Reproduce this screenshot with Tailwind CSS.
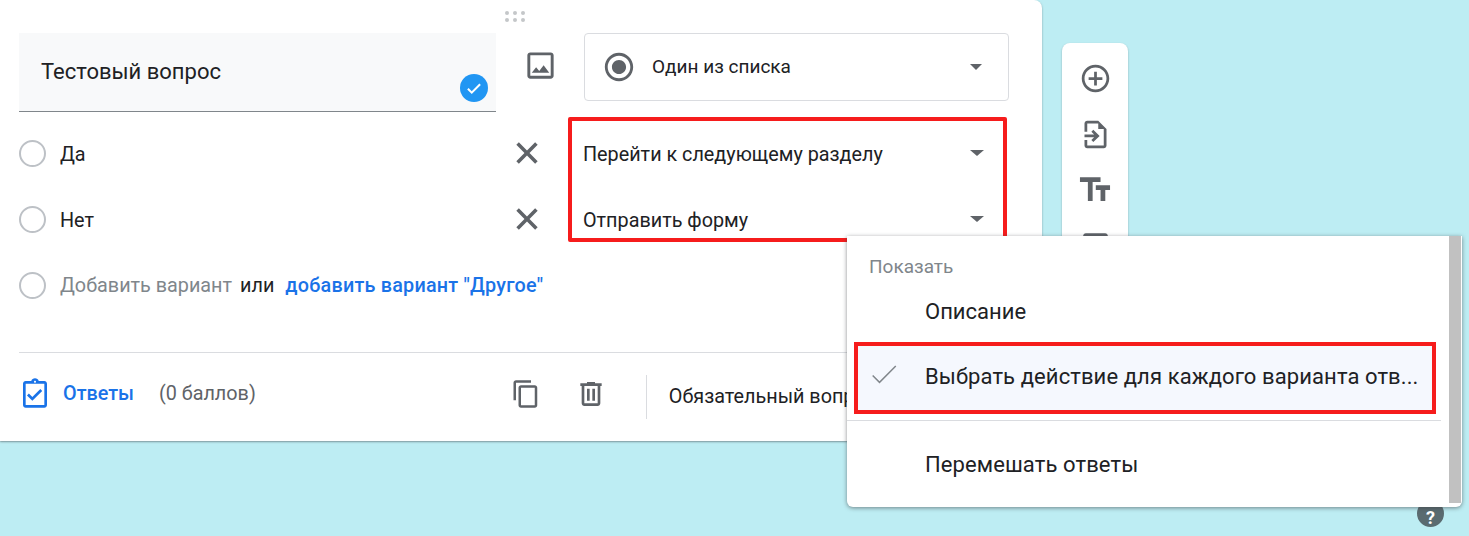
<!DOCTYPE html>
<html lang="ru">
<head>
    <meta charset="UTF-8">
    <title>Тестовый вопрос</title>
    <script src="https://cdn.jsdelivr.net/npm/@tailwindcss/browser@4"></script>
</head>
<body class="relative h-[536px] w-[1469px] overflow-hidden bg-[#bdedf3] font-['Roboto',sans-serif] text-[#202124]">
    <div class="flex items-start">
        <!-- question card -->
        <div class="relative h-[441px] w-[1042px] rounded-br-lg rounded-tr-lg bg-white pt-[33px] shadow-[0_1px_2px_rgba(60,64,67,0.5)]">
            <div class="absolute left-[505px] top-[11px] grid grid-cols-3 gap-x-[4px] gap-y-[3px]">
                <span class="size-[4px] rounded-full bg-[#c4c7c9]"></span><span class="size-[4px] rounded-full bg-[#c4c7c9]"></span><span class="size-[4px] rounded-full bg-[#c4c7c9]"></span>
                <span class="size-[4px] rounded-full bg-[#c4c7c9]"></span><span class="size-[4px] rounded-full bg-[#c4c7c9]"></span><span class="size-[4px] rounded-full bg-[#c4c7c9]"></span>
            </div>

            <div class="flex h-[87px] items-start pl-[19px]">
                <div class="relative flex h-[79px] w-[477px] items-center border-b border-[#80868b] bg-[#f8f9fa] pl-[22px] pb-[2px] text-[22px]">
                    Тестовый вопрос
                    <span class="absolute left-[441px] top-[41px] flex size-[28px] items-center justify-center rounded-full bg-[#2196f3]">
                        <svg viewBox="0 0 24 24" class="size-[18px] fill-white"><path d="M9 16.200 4.800 12l-1.900 1.900L9 20 21.100 7.900 19.200 6z"/></svg>
                    </span>
                </div>
                <svg viewBox="0 0 24 24" class="ml-[27px] mt-[15px] size-[35px] fill-[#5f6368]"><path d="M19 5v14H5V5h14m0-2H5c-1.100 0-2 .900-2 2v14c0 1.100.900 2 2 2h14c1.100 0 2-.900 2-2V5c0-1.100-.900-2-2-2zm-4.860 8.860l-3 3.870L9 13.140 6 17h12l-3.860-5.140z"/></svg>
                <div class="ml-[26px] flex h-[68px] w-[425px] items-center rounded border border-[#dadce0] pl-[17px] pr-[26px]">
                    <svg viewBox="0 0 24 24" class="size-[34px] fill-[#5f6368]"><path d="M12 7c-2.760 0-5 2.240-5 5s2.240 5 5 5 5-2.240 5-5-2.240-5-5-5zm0-5C6.480 2 2 6.480 2 12s4.480 10 10 10 10-4.480 10-10S17.520 2 12 2zm0 18c-4.420 0-8-3.580-8-8s3.580-8 8-8 8 3.580 8 8-3.580 8-8 8z"/></svg>
                    <span class="ml-[16px] flex-1 text-[19px]">Один из списка</span>
                    <span class="h-0 w-0 border-x-[6px] border-t-[6px] border-x-transparent border-t-[#5f6368]"></span>
                </div>
            </div>

            <!-- options -->
            <div class="flex h-[66px] items-center pl-[19px]">
                <span class="size-[27px] rounded-full border-2 border-[#bdc1c6]"></span>
                <span class="ml-[14px] w-[451px] pt-[3px] text-[19.8px]">Да</span>
                <svg viewBox="0 0 24 24" class="size-[32px] fill-[#5f6368]"><path d="M20 5.900 18.100 4 12 10.100 5.900 4 4 5.900 10.100 12 4 18.100 5.900 20 12 13.900 18.100 20 20 18.100 13.900 12z"/></svg>
                <span class="ml-[40px] w-[387px] pt-[3px] text-[19.8px]">Перейти к следующему разделу</span>
                <span class="h-0 w-0 border-x-[7px] border-t-[6px] border-x-transparent border-t-[#5f6368]"></span>
            </div>
            <div class="flex h-[66px] items-center pl-[19px]">
                <span class="size-[27px] rounded-full border-2 border-[#bdc1c6]"></span>
                <span class="ml-[14px] w-[451px] pt-[3px] text-[19.8px]">Нет</span>
                <svg viewBox="0 0 24 24" class="size-[32px] fill-[#5f6368]"><path d="M20 5.900 18.100 4 12 10.100 5.900 4 4 5.900 10.100 12 4 18.100 5.900 20 12 13.900 18.100 20 20 18.100 13.900 12z"/></svg>
                <span class="ml-[40px] w-[387px] pt-[3px] text-[19.8px]">Отправить форму</span>
                <span class="h-0 w-0 border-x-[7px] border-t-[6px] border-x-transparent border-t-[#5f6368]"></span>
            </div>
            <div class="flex h-[66px] items-center pl-[19px] text-[19.8px]">
                <span class="size-[27px] rounded-full border-2 border-[#bdc1c6]"></span>
                <span class="ml-[14px] pt-[2px] text-[#80868b]">Добавить вариант</span>
                <span class="ml-[8px] pt-[2px]">или</span>
                <span class="ml-[11px] pt-[2px] font-medium tracking-[0.22px] text-[#1a73e8]">добавить вариант "Другое"</span>
            </div>

            <div class="absolute left-[568px] top-[117px] h-[125px] w-[439px] rounded-[2px] border-[4px] border-[#f61c1c]"></div>

            <!-- footer -->
            <div class="ml-[19px] mt-[34px] flex h-[88px] items-center border-t border-[#dadce0] text-[19.8px]">
                <svg viewBox="0 0 24 24" class="size-[32px] -translate-y-[4px] fill-[#1a73e8]"><path d="M19 3h-4.180C14.400 1.840 13.300 1 12 1s-2.400.840-2.820 2H5c-1.100 0-2 .900-2 2v16c0 1.100.900 2 2 2h14c1.100 0 2-.900 2-2V5c0-1.100-.900-2-2-2zm-7-.250c.410 0 .750.340.750.750s-.340.750-.750.750-.750-.340-.750-.750.340-.750.750-.750zM19 21H5V5h14v16zm-1.590-10.590L16 9l-6 6-2.590-2.590L6 13.830 10 17.830z"/></svg>
                <span class="ml-[12px] -translate-y-[3px] font-medium text-[#1a73e8]">Ответы</span>
                <span class="ml-[25px] -translate-y-[3px] text-[#5f6368]">(0 баллов)</span>
                <svg viewBox="0 0 24 24" class="ml-[255px] size-[30px] -translate-y-[3px] fill-[#5f6368]"><path d="M16 1H4c-1.100 0-2 .900-2 2v14h2V3h12V1zm3 4H8c-1.100 0-2 .900-2 2v14c0 1.100.900 2 2 2h11c1.100 0 2-.900 2-2V7c0-1.100-.900-2-2-2zm0 16H8V7h11v14z"/></svg>
                <svg viewBox="0 0 24 24" class="ml-[34px] size-[32px] -translate-y-[3px] fill-[#5f6368]"><path d="M15 4V3H9v1H4v2h1v13c0 1.100.900 2 2 2h10c1.100 0 2-.900 2-2V6h1V4h-5zm2 15H7V6h10v13zM9 8h2v9H9zm4 0h2v9h-2z"/></svg>
                <span class="ml-[39px] h-[44px] w-px bg-[#dadce0]"></span>
                <span class="ml-[22px] whitespace-nowrap">Обязательный вопрос</span>
            </div>
        </div>

        <!-- side toolbar -->
        <div class="ml-[20px] mt-[43px] flex h-[260px] w-[66px] flex-col items-center gap-[23px] rounded-lg bg-white pt-[19px] shadow-[0_1px_2px_rgba(60,64,67,0.4)]">
            <svg viewBox="0 0 24 24" class="size-[33px] fill-[#5f6368]"><path d="M13 7h-2v4H7v2h4v4h2v-4h4v-2h-4V7zm-1-5C6.480 2 2 6.480 2 12s4.480 10 10 10 10-4.480 10-10S17.520 2 12 2zm0 18c-4.410 0-8-3.590-8-8s3.590-8 8-8 8 3.590 8 8-3.590 8-8 8z"/></svg>
            <svg viewBox="0 0 24 24" class="size-[33px] fill-[#5f6368]"><path d="M14 2H6c-1.100 0-2 .900-2 2v6h2V4h8v4zM14 2v6h6zM18 8v12H6v-4H4v4c0 1.100.900 2 2 2h12c1.100 0 2-.900 2-2V8zM4 12v2h7l-2 2 1.400 1.400L15 13l-4.600-4.400L9 10l2 2z"/></svg>
            <svg viewBox="0 0 24 24" class="-my-[3px] size-[38px] shrink-0 fill-[#5f6368]"><path d="M2.500 4v3h5v12h3V7h5V4h-13zm19 5h-9v3h3v7h3v-7h3V9z"/></svg>
            <svg viewBox="0 0 24 24" class="size-[33px] fill-[#5f6368]"><path d="M19 5v14H5V5h14m0-2H5c-1.100 0-2 .900-2 2v14c0 1.100.900 2 2 2h14c1.100 0 2-.900 2-2V5c0-1.100-.900-2-2-2z"/></svg>
        </div>
    </div>

    <!-- help button -->
    <div class="absolute left-[1417px] top-[500px] flex size-[27px] items-center justify-center rounded-full bg-[#5a6b70] pt-[8px] text-[18px] font-bold text-white">?</div>

    <!-- dropdown menu -->
    <div class="absolute left-[847px] top-[236px] h-[271px] w-[615px] overflow-hidden rounded-b-md bg-white shadow-[0_1px_4px_rgba(60,64,67,0.6)]">
        <div class="absolute right-[1px] top-0 h-[267px] w-[12px] bg-[#c1c1c1]"></div>
        <div class="w-[594px]">
            <div class="flex h-[50px] items-end pb-[5px] pl-[22px] text-[19px] text-[#80868b]">Показать</div>
            <div class="flex h-[50px] items-center pl-[78px] text-[22px]">Описание</div>
            <div class="ml-[7px] mt-[6px] flex h-[72px] w-[582px] items-center border-[4px] border-[#f61c1c] bg-[#f5f8fe] pb-[3px] pl-[67px] text-[22px] tracking-[0.1px]">
                <svg viewBox="0 0 24 24" class="absolute left-[19px] size-[36px] -translate-y-[2px] fill-[#80868b]"><path d="M9 16.200 4.800 12l-.700.700L9 17.600 20.200 6.400l-.700-.700z"/></svg>
                <span class="whitespace-nowrap">Выбрать действие для каждого варианта отв...</span>
            </div>
            <div class="mt-[6px] h-px bg-[#dadce0]"></div>
            <div class="flex h-[86px] items-center pl-[78px] text-[22px] tracking-[0.1px]">Перемешать ответы</div>
        </div>
    </div>
</body>
</html>
